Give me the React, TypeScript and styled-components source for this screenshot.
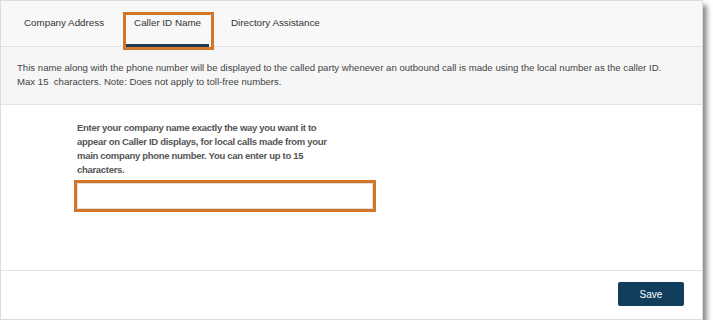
import React from "react";
import styled, { createGlobalStyle } from "styled-components";

const Global = createGlobalStyle`
  html, body { margin: 0; padding: 0; background: #ffffff; }
  body { font-family: Arial, "Liberation Sans", sans-serif; }
  * { box-sizing: border-box; }
`;

const Panel = styled.div`
  width: 703px;
  height: 320px;
  border: 1px solid #dcdcdc;
  background: #ffffff;
  box-shadow: 4px 5px 5px rgba(0, 0, 0, 0.45);
  display: flex;
  flex-direction: column;
`;

const TabBar = styled.div`
  height: 46px;
  flex: none;
  background: #f8f8f8;
  border-bottom: 1px solid #e2e2e2;
  display: flex;
  align-items: stretch;
  padding-left: 15px;
  gap: 14px;
`;

const Tab = styled.div<{ $active?: boolean }>`
  position: relative;
  padding: 16px 8px 0;
  font-size: 9.8px;
  color: #333333;
  white-space: nowrap;
  border-bottom: 3px solid ${(p) => (p.$active ? "#1f3a54" : "transparent")};
  margin-bottom: -1px;
`;

const Highlight = styled.span`
  position: absolute;
  left: -3px;
  right: -5px;
  top: 11px;
  bottom: -6px;
  border: 3px solid #d2762a;
  pointer-events: none;
`;

const Notice = styled.div`
  flex: none;
  background: #f6f6f6;
  border-bottom: 1px solid #e4e4e4;
  padding: 14px 16px 15px;
  font-size: 9.6px;
  line-height: 14px;
  color: #444444;
  white-space: nowrap;
`;

const Content = styled.div`
  flex: 1;
  padding: 16px 0 0 73px;
  border-bottom: 1px solid #e2e2e2;
`;

const Label = styled.div`
  margin-left: 3px;
  font-size: 9.5px;
  letter-spacing: -0.3px;
  font-weight: bold;
  line-height: 14px;
  color: #555555;
`;

const Field = styled.div`
  margin-top: 3px;
  width: 302px;
  height: 32px;
  border: 3px solid #d2762a;
`;

const Input = styled.input`
  display: block;
  width: 100%;
  height: 100%;
  border: 1px solid #e6ddd4;
  background: #ffffff;
  outline: none;
  padding: 0 6px;
  font-size: 11px;
`;

const Footer = styled.div`
  flex: none;
  height: 48px;
  display: flex;
  justify-content: flex-end;
  align-items: flex-start;
  padding: 11px 18px 0 0;
`;

const SaveButton = styled.button`
  width: 66px;
  height: 24px;
  border: none;
  border-radius: 2px;
  background: #123e5e;
  color: #ffffff;
  font-family: Arial, "Liberation Sans", sans-serif;
  font-size: 10px;
  cursor: pointer;
`;

export default function App() {
  return (
    <>
      <Global />
      <Panel>
        <TabBar>
          <Tab>Company Address</Tab>
          <Tab $active>
            Caller ID Name
            <Highlight />
          </Tab>
          <Tab>Directory Assistance</Tab>
        </TabBar>
        <Notice>
          This name along with the phone number will be displayed to the called party whenever an outbound call is made using the local number as the caller ID.
          <br />
          Max 15&nbsp; characters. Note: Does not apply to toll-free numbers.
        </Notice>
        <Content>
          <Label>
            Enter your company name exactly the way you want it to
            <br />
            appear on Caller ID displays, for local calls made from your
            <br />
            main company phone number. You can enter up to 15
            <br />
            characters.
          </Label>
          <Field>
            <Input type="text" maxLength={15} />
          </Field>
        </Content>
        <Footer>
          <SaveButton>Save</SaveButton>
        </Footer>
      </Panel>
    </>
  );
}
